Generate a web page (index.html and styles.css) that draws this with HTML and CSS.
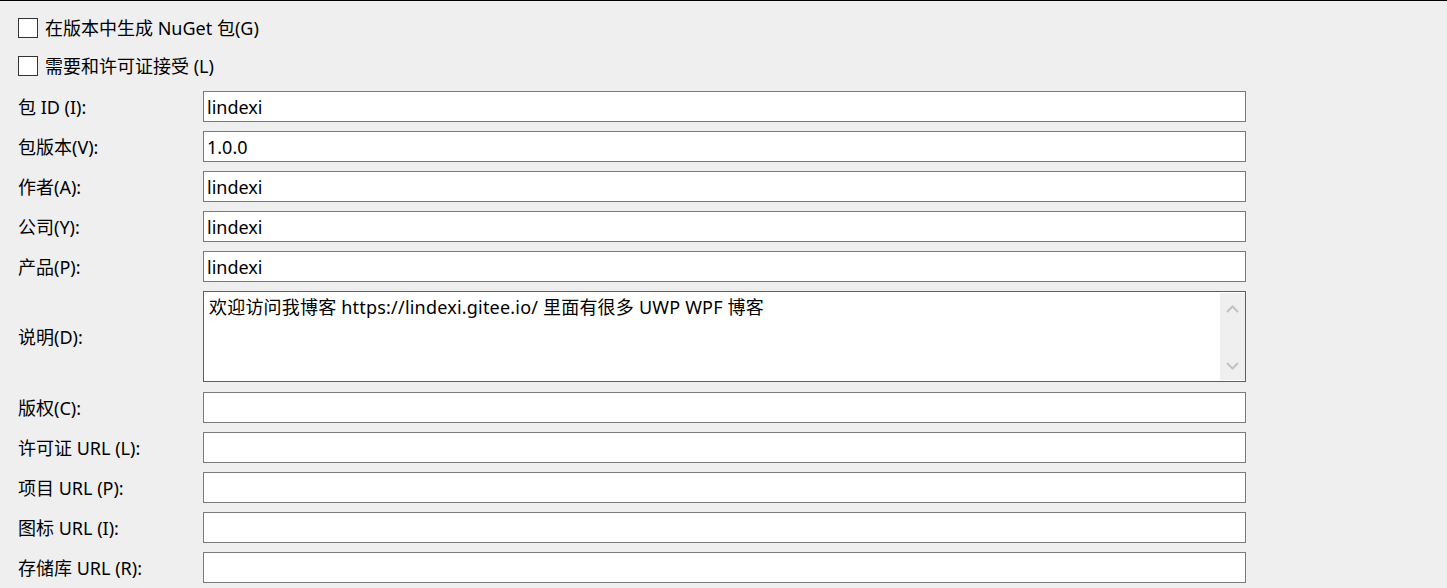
FILE: index.html
```html
<!DOCTYPE html>
<html lang="zh-CN">
<head>
<meta charset="utf-8">
<title>NuGet 包</title>
<link rel="stylesheet" href="styles.css">
</head>
<body>
<div class="page">
  <div class="check-row"><span class="checkbox"></span><span class="check-label">在版本中生成 NuGet 包(G)</span></div>
  <div class="check-row"><span class="checkbox"></span><span class="check-label">需要和许可证接受 (L)</span></div>
  <div class="form">
    <label class="label">包 ID (I):</label>
    <input class="field" type="text" value="lindexi" readonly>
    <label class="label">包版本(V):</label>
    <input class="field" type="text" value="1.0.0" readonly>
    <label class="label">作者(A):</label>
    <input class="field" type="text" value="lindexi" readonly>
    <label class="label">公司(Y):</label>
    <input class="field" type="text" value="lindexi" readonly>
    <label class="label">产品(P):</label>
    <input class="field" type="text" value="lindexi" readonly>
    <label class="label label-desc">说明(D):</label>
    <div class="memo">
      <div class="memo-text">欢迎访问我博客 https://lindexi.gitee.io/ 里面有很多 UWP WPF 博客</div>
      <div class="scrollbar">
        <svg class="arrow" width="13" height="8" viewBox="0 0 13 8"><path d="M1 7 L6.5 1.5 L12 7" fill="none" stroke="#c2c2c2" stroke-width="2"/></svg>
        <svg class="arrow" width="13" height="8" viewBox="0 0 13 8"><path d="M1 1 L6.5 6.5 L12 1" fill="none" stroke="#c2c2c2" stroke-width="2"/></svg>
      </div>
    </div>
    <label class="label">版权(C):</label>
    <input class="field" type="text" value="" readonly>
    <label class="label">许可证 URL (L):</label>
    <input class="field" type="text" value="" readonly>
    <label class="label">项目 URL (P):</label>
    <input class="field" type="text" value="" readonly>
    <label class="label">图标 URL (I):</label>
    <input class="field" type="text" value="" readonly>
    <label class="label">存储库 URL (R):</label>
    <input class="field" type="text" value="" readonly>
  </div>
</div>
</body>
</html>
```
FILE: styles.css
```css
html, body {
  margin: 0;
  padding: 0;
  background: #efefef;
}
body {
  border-top: 1px solid #000;
  font-family: "Noto Sans", "Noto Sans CJK SC", sans-serif;
  font-size: 18px;
  color: #000;
  height: 587px;
  overflow: hidden;
}
.page {
  padding: 17px 0 0 18px;
}
.check-row {
  display: flex;
  align-items: center;
  height: 20px;
  gap: 7px;
  margin-bottom: 18px;
}
.check-row + .check-row {
  margin-bottom: 15px;
}
.checkbox {
  width: 20px;
  height: 20px;
  box-sizing: border-box;
  border: 1px solid #333;
  background: #fff;
  flex: none;
}
.check-label {
  line-height: 20px;
}
.form {
  display: grid;
  grid-template-columns: 185px 1043px;
  row-gap: 9px;
  align-items: center;
}
.label {
  line-height: 20px;
}
.field {
  box-sizing: border-box;
  width: 1043px;
  height: 31px;
  margin: 0;
  padding: 0 3px;
  border: 1px solid #7a7a7a;
  border-radius: 0;
  background: #fff;
  font: inherit;
  color: #000;
  outline: none;
}
.memo {
  box-sizing: border-box;
  height: 91px;
  margin-bottom: 1px;
  border: 1px solid #0078d7;
  background: #fff;
  display: flex;
}
.memo-text {
  flex: 1;
  padding: 3px 5px;
  line-height: 24px;
  letter-spacing: 0.2px;
}
.scrollbar {
  width: 25px;
  margin: 1px 0;
  background: #efefef;
  display: flex;
  flex-direction: column;
  justify-content: space-between;
  align-items: center;
  padding: 12px 0 10px;
  box-sizing: border-box;
}
.arrow {
  display: block;
}
```
